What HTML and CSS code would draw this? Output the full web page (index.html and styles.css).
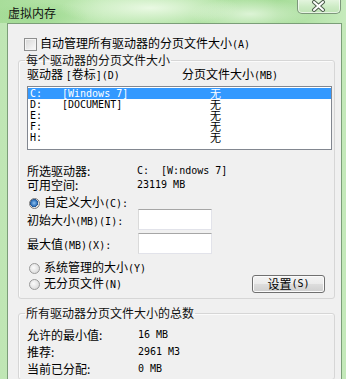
FILE: index.html
```html
<!DOCTYPE html>
<html lang="zh-CN">
<head>
<meta charset="utf-8">
<title>虚拟内存</title>
<link rel="stylesheet" href="styles.css">
</head>
<body>
<div class="win">
  <div class="titlebar">
    <span class="title">虚拟内存</span>
    <div class="close">
      <svg width="42" height="14" viewBox="0 0 42 14">
        <path d="M16 3 L25 11 M25 3 L16 11" stroke="#4d5d4d" stroke-width="4" stroke-linecap="round" fill="none"/>
        <path d="M16 3 L25 11 M25 3 L16 11" stroke="#ffffff" stroke-width="2" stroke-linecap="round" fill="none"/>
      </svg>
    </div>
  </div>
  <div class="client">
    <div class="chk-row"><span class="chk"></span><span>自动管理所有驱动器的分页文件大小<span class="m">(A)</span></span></div>

    <fieldset class="group g1">
      <legend>每个驱动器的分页文件大小</legend>
      <div class="hdr">
        <span class="c1">驱动器 <span class="m">[</span>卷标<span class="m">](D)</span></span>
        <span class="c2">分页文件大小<span class="m">(MB)</span></span>
      </div>
      <div class="list">
        <div class="row sel"><span class="d m">C:</span><span class="v m">[Windows 7]</span><span class="s">无</span></div>
        <div class="row"><span class="d m">D:</span><span class="v m">[DOCUMENT]</span><span class="s">无</span></div>
        <div class="row"><span class="d m">E:</span><span class="v m"></span><span class="s">无</span></div>
        <div class="row"><span class="d m">F:</span><span class="v m"></span><span class="s">无</span></div>
        <div class="row"><span class="d m">H:</span><span class="v m"></span><span class="s">无</span></div>
      </div>
      <div class="info">
        <span>所选驱动器:</span><span class="m pre">C:  [W:ndows 7]</span>
        <span>可用空间:</span><span class="m">23119 MB</span>
      </div>
      <div class="radio-row r1"><span class="radio on"></span><span>自定义大小<span class="m">(C):</span></span></div>
      <div class="inputs">
        <span>初始大小<span class="m">(MB)(I):</span></span><span class="inp"></span>
        <span>最大值<span class="m">(MB)(X):</span></span><span class="inp"></span>
      </div>
      <div class="radio-row r2"><span class="radio"></span><span>系统管理的大小<span class="m">(Y)</span></span></div>
      <div class="last">
        <div class="radio-row"><span class="radio"></span><span>无分页文件<span class="m">(N)</span></span></div>
        <div class="btn">设置<span class="m">(S)</span></div>
      </div>
    </fieldset>

    <fieldset class="group g2">
      <legend>所有驱动器分页文件大小的总数</legend>
      <div class="totals">
        <span>允许的最小值:</span><span class="m">16 MB</span>
        <span>推荐:</span><span class="m">2961 M3</span>
        <span>当前已分配:</span><span class="m">0 MB</span>
      </div>
    </fieldset>
  </div>
</div>
</body>
</html>
```

FILE: styles.css
```css
html, body {
  margin: 0;
  padding: 0;
}
body {
  width: 346px;
  height: 379px;
  overflow: hidden;
  font-family: "Noto Sans CJK SC", "Noto Sans", sans-serif;
  font-size: 12px;
  color: #000;
}
.m {
  font-family: "DejaVu Sans Mono", "Liberation Mono", monospace;
  font-size: 10px;
}
.pre {
  white-space: pre;
}
.win {
  height: 379px;
  display: flex;
  flex-direction: column;
  background: linear-gradient(90deg, #bfe6b4 0%, #cdeec4 50%, #c4e9ba 100%);
}
.titlebar {
  height: 23px;
  flex: none;
  display: flex;
  justify-content: space-between;
  align-items: flex-start;
  padding-left: 8px;
  background:
    radial-gradient(ellipse 90px 18px at 150px 8px, rgba(236, 250, 230, 0.95) 0%, rgba(236, 250, 230, 0) 100%),
    radial-gradient(ellipse 60px 16px at 250px 14px, rgba(226, 246, 220, 0.9) 0%, rgba(226, 246, 220, 0) 100%),
    radial-gradient(ellipse 50px 14px at 40px 16px, rgba(150, 214, 136, 0.7) 0%, rgba(150, 214, 136, 0) 100%),
    linear-gradient(90deg, #a8dd9a 0%, #bde8b1 30%, #b0e2a3 60%, #a5dc97 80%, #c6ebbd 100%);
}
.title {
  line-height: 14px;
  margin-top: 6px;
  color: #111;
}
.close {
  width: 42px;
  height: 14px;
  margin-top: -1px;
  margin-right: 5px;
  border: 1px solid #7d977b;
  border-top: none;
  border-radius: 0 0 5px 5px;
  background: linear-gradient(180deg, #e6f6e1 0%, #cdebc5 55%, #bfe4b5 100%);
  box-shadow: inset 0 0 0 1px rgba(255, 255, 255, 0.6);
  display: flex;
}
.close svg {
  display: block;
}
.client {
  flex: 1;
  margin: 0 4px 0 7px;
  border: 1px solid #7b9e78;
  border-bottom: none;
  background: #f0f0f0;
  padding: 13px 6px 0 10px;
}
.chk-row {
  display: flex;
  align-items: center;
  height: 14px;
  line-height: 14px;
  margin-left: 6px;
  gap: 3px;
}
.chk {
  width: 11px;
  height: 11px;
  border: 1px solid #8e8f8f;
  background: linear-gradient(135deg, #d6d6d6 0%, #ececec 60%, #fafafa 100%);
  box-shadow: inset 0 0 0 1px #f4f4f4;
}
.group {
  margin: 0;
  min-width: 0;
  border: 1px solid #d6d6d6;
  border-radius: 3px;
  box-shadow: inset 1px 1px 0 #fbfbfb;
  padding: 0 2px 5px 8px;
}
.group legend {
  padding: 0 1px;
  margin-left: -2px;
  line-height: 14px;
  color: #111;
}
.g1 {
  margin-top: 2px;
}
.g2 {
  margin-top: 7px;
  padding-bottom: 0;
  height: 72px;
}
.hdr {
  display: flex;
  line-height: 14px;
}
.c1 {
  width: 155px;
}
.list {
  margin-top: 3px;
  height: 61px;
  padding-top: 1px;
  border: 1px solid #828790;
  background: #fff;
}
.row {
  display: flex;
  height: 11px;
  line-height: 11px;
  align-items: center;
}
.row.sel {
  background: #3399ff;
  color: #fff;
}
.d {
  width: 34px;
  padding-left: 2px;
  box-sizing: border-box;
}
.v {
  width: 148px;
}
.s {
  font-size: 11px;
  line-height: 11px;
}
.info {
  margin-top: 14px;
  display: grid;
  grid-template-columns: 110px 1fr;
  line-height: 14px;
}
.radio-row {
  display: flex;
  align-items: center;
  gap: 4px;
  height: 12px;
  line-height: 12px;
  padding-left: 2px;
}
.r1 {
  margin-top: 5px;
}
.r2 {
  margin-top: 8px;
}
.radio {
  width: 11px;
  height: 11px;
  box-sizing: border-box;
  border-radius: 50%;
  border: 1px solid #9a9a9a;
  background: radial-gradient(circle at 40% 40%, #fbfbfb 0%, #e2e2e2 60%, #cfcfcf 100%);
}
.radio.on {
  border-color: #7b7b7b;
  background:
    radial-gradient(circle at 45% 45%, #8fc2f0 0%, #2d6fb8 45%, #1e4f8c 55%, rgba(0, 0, 0, 0) 56%),
    radial-gradient(circle, #f6f6f6 0%, #d8d8d8 100%);
}
.inputs {
  display: grid;
  grid-template-columns: 111px 74px;
  grid-auto-rows: 21px;
  row-gap: 3px;
  align-items: center;
}
.inp {
  height: 21px;
  box-sizing: border-box;
  background: #fff;
  border: 1px solid #e2e3ea;
  border-top-color: #a6a6a6;
  border-left-color: #dadada;
}
.last {
  margin-top: 1px;
  height: 18px;
  display: flex;
  justify-content: space-between;
  align-items: center;
}
.btn {
  width: 73px;
  height: 18px;
  box-sizing: border-box;
  margin-right: 7px;
  border: 1px solid #707070;
  border-radius: 3px;
  background: linear-gradient(180deg, #f4f4f4 0%, #ebebeb 48%, #dddddd 52%, #cfcfcf 100%);
  box-shadow: inset 0 0 0 1px #fbfbfb;
  display: flex;
  align-items: center;
  justify-content: center;
  line-height: 14px;
}
.totals {
  margin-top: 6px;
  display: grid;
  grid-template-columns: 111px 1fr;
  grid-auto-rows: 17px;
  align-items: center;
}
```
